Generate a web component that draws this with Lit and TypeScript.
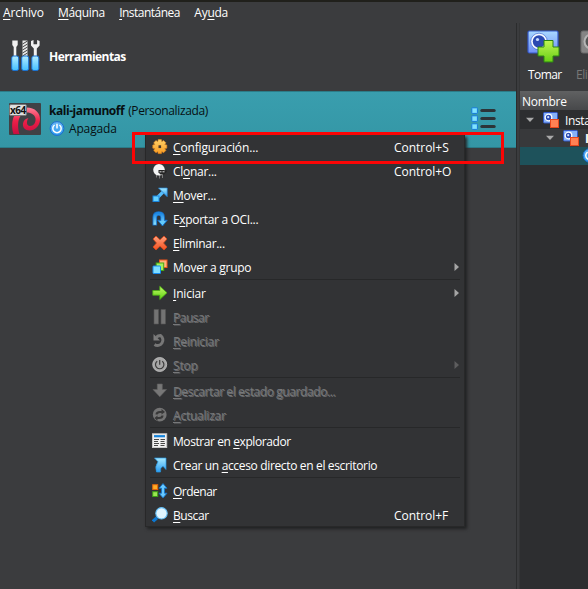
import { LitElement, html, svg, css, nothing, TemplateResult } from "lit";
import { customElement, property } from "lit/decorators.js";

/** Label with an "&" mnemonic marker, tracked so that it spans a given width. */
@customElement("ui-label")
class UiLabel extends LitElement {
  @property() text = "";
  @property({ type: Number }) span = 0;

  static styles = css`
    :host { display: block; white-space: pre; line-height: 16px; }
    .run { display: inline-block; }
    .key { text-decoration: underline; text-decoration-thickness: 1px; text-underline-offset: 2px; }
  `;

  updated() {
    const run = this.renderRoot.querySelector<HTMLElement>(".run")!;
    run.style.letterSpacing = "0px";
    const count = this.text.replace("&", "").length;
    if (this.span) run.style.letterSpacing = `${(this.span - 0.3 - run.getBoundingClientRect().width) / count}px`;
  }

  render() {
    const i = this.text.indexOf("&");
    return i < 0
      ? html`<span class="run">${this.text}</span>`
      : html`<span class="run">${this.text.slice(0, i)}<span class="key">${this.text[i + 1]}</span>${this.text.slice(i + 2)}</span>`;
  }
}

const glyphs: Record<string, TemplateResult> = {
  gear: svg`<path d="M6.200.600h3.200l.4 2.100 1.800-1.200 2.300 2.300-1.200 1.800 2.100.400v3.200l-2.100.400 1.200 1.800-2.300 2.300-1.800-1.200-.4 2.100H6.200l-.4-2.100-1.800 1.200-2.300-2.300 1.200-1.800L.8 9.200V6l2.100-.4L1.700 3.800 4 1.500l1.800 1.200z" fill="url(#gold)" stroke="#e58a20" stroke-width=".6"/><rect x="6.500" y="6.300" width="2.600" height="2.800" fill="#4a3a2c"/>`,
  sheep: svg`<path d="M4.500 11v3.500M7.500 12v3.500M10.500 11v4" stroke="#7b7b7b" stroke-width="1"/><circle cx="7" cy="6.800" r="5.800" fill="#f4f4f4"/><path d="M6.500 7h5l3.500.7-.5 1.300-2.500 2.500H8.500l-2-2z" fill="#242424"/><path d="M7.500 8.800h2M10.500 8.800h2" stroke="#ddd"/>`,
  move: svg`<path d="M6 10 11 5" stroke="#55bdfb" stroke-width="3.200"/><path d="M6.500 1H15.200V9.700z" fill="url(#blue)" stroke="#2587d8" stroke-width=".7"/><rect x="1" y="9" width="6" height="5.500" fill="#63d0ff" stroke="#1a84dc"/>`,
  export: svg`<path d="M2.800 14.500V6.200Q2.800 2.500 6.700 2.500t3.900 3.700V10" fill="none" stroke="#156fc8" stroke-width="4.600"/><path d="M5.800 9.300h9.400l-4.700 5.700z" fill="#62cbfb" stroke="#156fc8"/><path d="M2.800 13.700V6.200Q2.800 2.500 6.700 2.500t3.900 3.700V11" fill="none" stroke="url(#bluef)" stroke-width="2.800"/>`,
  cross: svg`<path d="M4 1 8 4.800 12 1l3 3-3.500 4 3.500 4-3 3-4-3.800L4 15l-3-3 3.500-4L1 4z" fill="url(#red)" stroke="#d94618" stroke-width=".8"/>`,
  group: svg`<rect x="7.500" y="1" width="7.500" height="7.500" fill="#ffb27c" stroke="#f2541b"/><rect x="4.200" y="4" width="7.500" height="7.500" fill="#a5ee60" stroke="#46a915"/><rect x="1" y="7" width="7.500" height="7.500" rx=".5" fill="#7ddcff" stroke="#1589ee"/>`,
  go: svg`<path d="M.8 5.500h7V1.200L15 7.800l-7.200 6.700v-4.300h-7z" fill="url(#green)" stroke="#4ab011" stroke-width=".8"/>`,
  pause: svg`<path d="M2 .5h4.500v14.500H2zM9 .5h4.500v14.500H9z" fill="#737373" stroke="#555" stroke-width=".6"/>`,
  reset: svg`<path d="M1.500 1v6.500H8z" fill="#7c7c7c"/><path d="M4 4.500Q6 2.500 8.500 2.500A5.200 5.200 0 1 1 2.500 11.500" fill="none" stroke="#777" stroke-width="3"/>`,
  power: svg`<circle cx="7.700" cy="7.500" r="7" fill="#a6a6a6" stroke="#c4c4c4" stroke-width=".8"/><path d="M7.700 3v4.800M5.200 4.200a4.200 4.200 0 1 0 5 0" fill="none" stroke="#3c3c3c" stroke-width="1.200"/>`,
  powerBlue: svg`<circle cx="8" cy="7.500" r="6.900" fill="url(#power)" stroke="#1d6ccc" stroke-width="1"/><path d="M8 2.800v4.600M5.600 4a4.200 4.200 0 1 0 4.800 0" fill="none" stroke="#fff" stroke-width="1.500"/>`,
  down: svg`<path d="M5.300 1h5v5.500h4.300L7.800 13.800 1 6.500h4.300z" fill="#777" stroke="#626262" stroke-width=".6"/>`,
  refresh: svg`<circle cx="7.700" cy="7.700" r="6.900" fill="#747474"/><path d="M3.500 7.500Q3.500 4 8 4h1.500V2L13 5 9.500 7.500V6H8Q6 6 5.500 7.500M11.500 8.500q0 3.500-4.500 3.500H5.500v2L2.500 11l3-2.500V10H7q2 0 2.500-1.500" fill="#383838"/>`,
  page: svg`<rect x=".5" y=".8" width="14.200" height="13.700" fill="#f1f1f1" stroke="#c9c9c9"/><path d="M2 3.200h11" stroke="#1684dc" stroke-width="2.200"/><path d="M2 6.500h5M2 8.500h4M2 10.500h5M2 12.500h4M8.500 6.500h4.500M8.500 8.500h4M8.500 10.500h4.500M8.500 12.500h4" stroke="#484848"/>`,
  shortcut: svg`<path d="M2.500 1H14V12.500L11 9.200Q7.800 11 8.500 15H4.500Q2.500 9.500 6 4.800z" fill="url(#blue)" stroke="#2799e7" stroke-width=".7"/>`,
  sort: svg`<rect x=".7" y="1.700" width="5" height="4.800" fill="#ffae26" stroke="#e2650c"/><rect x=".7" y="8.700" width="5" height="4.800" fill="#9be851" stroke="#3b9f17"/><path d="M11 .600 15 5.200h-2.500v5H15l-4 4.700-4-4.700h2.500v-5H7z" fill="#68c9ff" stroke="#1474cb" stroke-width=".9"/>`,
  search: svg`<path d="M1 14.300 5 10.800" stroke="#0c78d2" stroke-width="3.200"/><circle cx="9.500" cy="6.300" r="5.700" fill="#dff5ff" stroke="#63bff7" stroke-width="1.100"/>`,
};

const icon = (name: string, size = 16) =>
  html`<svg width=${size} height=${size} viewBox="0 0 16 16">
    <defs>
      <linearGradient id="gold" x2="0" y2="1"><stop stop-color="#ffd36a"/><stop offset="1" stop-color="#f99b20"/></linearGradient>
      <linearGradient id="blue" x2="0" y2="1"><stop stop-color="#a6eaff"/><stop offset="1" stop-color="#2a9bf0"/></linearGradient>
      <linearGradient id="power" x2="0" y2="1"><stop stop-color="#69b6f3"/><stop offset="1" stop-color="#2d9df0"/></linearGradient>
      <linearGradient id="bluef" x2="0" y2="1"><stop stop-color="#1e88e2"/><stop offset="1" stop-color="#8be2ff"/></linearGradient>
      <linearGradient id="red" x2="0" y2="1"><stop stop-color="#ffa27e"/><stop offset="1" stop-color="#f2501f"/></linearGradient>
      <linearGradient id="green" x2="0" y2="1"><stop stop-color="#c5f86a"/><stop offset="1" stop-color="#5ed411"/></linearGradient>
    </defs>${glyphs[name]}</svg>`;

interface Entry { icon: string; text: string; span: number; keys?: string; keySpan?: number; sub?: boolean; off?: boolean }
const groups: Entry[][] = [
  [
    { icon: "gear", text: "&Configuración...", span: 85.5, keys: "Control+S", keySpan: 55 },
    { icon: "sheep", text: "Cl&onar...", span: 44, keys: "Control+O", keySpan: 57.5 },
    { icon: "move", text: "&Mover...", span: 43.5 },
    { icon: "export", text: "E&xportar a OCI...", span: 85.5 },
    { icon: "cross", text: "&Eliminar...", span: 52 },
    { icon: "group", text: "Mover a &grupo", span: 78.5, sub: true },
  ],
  [
    { icon: "go", text: "&Iniciar", span: 33, sub: true },
    { icon: "pause", text: "&Pausar", span: 36, off: true },
    { icon: "reset", text: "&Reiniciar", span: 46, off: true },
    { icon: "power", text: "&Stop", span: 25, sub: true, off: true },
  ],
  [
    { icon: "down", text: "&Descartar el estado guardado...", span: 162.5, off: true },
    { icon: "refresh", text: "&Actualizar", span: 53, off: true },
  ],
  [
    { icon: "page", text: "Mostrar en &explorador", span: 118 },
    { icon: "shortcut", text: "Crear un &acceso directo en el escritorio", span: 204.5 },
  ],
  [
    { icon: "sort", text: "&Ordenar", span: 44 },
    { icon: "search", text: "&Buscar", span: 36, keys: "Control+F", keySpan: 54.5 },
  ],
];

const camera = html`<svg width="33" height="33" viewBox="0 0 33 33">
  <defs>
    <linearGradient id="cam" x2="0" y2="1"><stop stop-color="#a9d8ff"/><stop offset="1" stop-color="#6f8ff6"/></linearGradient>
    <linearGradient id="plus" x2="0" y2="1"><stop stop-color="#c0f455"/><stop offset="1" stop-color="#68d014"/></linearGradient>
  </defs>
  <rect x="1" y="1" width="30" height="22" rx="1.500" fill="url(#cam)" stroke="#3559c9" stroke-width="1.200"/>
  <circle cx="12" cy="11.500" r="8.300" fill="#f5f9ff" stroke="#3559c9" stroke-width=".6"/>
  <circle cx="12" cy="11.500" r="6.200" fill="#2b49b1"/><circle cx="10.500" cy="9.500" r="1.600" fill="#c9dcff"/>
  <path d="M17 10.500h9v6.500H32v9h-6v6h-9v-6h-6v-9h6z" fill="url(#plus)" stroke="#2c8512"/>
</svg>`;

const cameraOff = html`<svg width="32" height="33" viewBox="0 0 32 33">
  <rect x="1" y="1" width="29.500" height="22" rx="2" fill="#858585" stroke="#6b6b6b"/>
  <circle cx="11.500" cy="11.500" r="7" fill="#555" stroke="#b5b5b5" stroke-width="2"/>
</svg>`;

const snapshot = html`<svg class="shot" width="16" height="16" viewBox="0 0 16 16">
  <rect x=".5" y=".5" width="14" height="10.500" rx="1" fill="#86b1f8" stroke="#3358c8"/>
  <circle cx="5.500" cy="5.500" r="3.300" fill="#2d4cb5" stroke="#fff" stroke-width="1.300"/><circle cx="5.200" cy="5.200" r="1.100" fill="#cfe0ff"/>
  <rect x="7.500" y="7.500" width="8" height="8" fill="#ff8154" stroke="#e8471c"/>
</svg>`;

const tools = html`<svg width="30" height="32" viewBox="0 0 30 32">
  <defs><linearGradient id="grip" x2="0" y2="1"><stop stop-color="#b3ecff"/><stop offset="1" stop-color="#43c0ff"/></linearGradient></defs>
  <path d="M1.300 0.500h5.400v4.500L5.300 7v9H2.700V7L1.300 5z" fill="#f1f1f1"/>
  <path d="M11.500.5h5v15.500h-5z" fill="#e9e9e9"/><path d="m11.500 4 5-3M11.500 7l5-3M11.500 10l5-3M11.500 13l5-3M11.500 16l5-3" stroke="#333" stroke-width=".9"/>
  <path d="M20 1 22.500 0v4.200h3.600V0l2.500 1v4.500L25.800 8.500V16h-3V8.500L20 5.500z" fill="#f1f1f1"/>
  <g fill="url(#grip)" stroke="#1a72d6"><rect x=".7" y="16" width="7" height="14.500" rx="2"/><rect x="10.700" y="16" width="7" height="14.500" rx="2"/><rect x="20.800" y="16" width="7" height="14.500" rx="2"/></g>
</svg>`;

const debian = html`<svg width="32" height="32" viewBox="0 0 32 32">
  <defs><linearGradient id="swirl" x2="0" y2="1"><stop stop-color="#ff8298"/><stop offset=".5" stop-color="#ee2048"/><stop offset="1" stop-color="#c80d40"/></linearGradient></defs>
  <rect width="32" height="32" rx="1" fill="#404145"/>
  <path d="M4.500 31C.5 18 6 4.500 17.500 4.500 26 4.500 31.500 10 31 17c-.5 6-5 10.500-10.500 10.500-4.500 0-7-3-6.500-7 .5-3 2.500-5 5.500-5.500-2 2.500-2.500 8 1.500 8 3.500 0 6-3 5.500-7.500C26 12 22 9.500 18 9.500 9.500 9.500 7.500 21 10.500 31z" fill="url(#swirl)"/>
</svg>`;

const details = html`<svg width="25" height="24" viewBox="0 0 25 24">
  ${[0.8, 8.8, 16.8].map((y) => svg`<rect x=".8" y=${y} width="5.600" height="5.600" rx=".5" fill="#7ee2ff" stroke="#1678d8"/><path d="M10.800 ${y + 2.8}h12.400" stroke="#2c3438" stroke-width="3" stroke-linecap="round"/>`)}
</svg>`;

const expander = html`<svg width="10" height="6" viewBox="0 0 10 6"><path d="M1 .8h8L5 5z" fill="#a9a9a9"/></svg>`;

@customElement("app-root")
class AppRoot extends LitElement {
  static styles = css`
    :host {
      display: block; position: relative; width: 588px; height: 589px; overflow: hidden;
      background: #3b3c3e; color: #fff; box-sizing: border-box; border-top: 2px solid #20201b;
      font: 12px/16px "Open Sans", "Noto Sans", sans-serif;
    }
    svg { display: block; flex: none; }
    .menubar { display: flex; gap: 14.4px; height: 21px; padding: 1px 0 0 3px; box-sizing: border-box; align-items: center; }
    .main { display: flex; height: 566px; }
    .machines { border-right: 1px solid #2b2c2d; box-sizing: border-box; flex: none; width: 517px; }
    .tools { display: flex; align-items: center; height: 68px; padding-left: 11px; gap: 8px; box-sizing: border-box; }
    .tools svg { margin-top: -2px; }
    .strong { font-weight: 700; }
    .machine {
      display: flex; align-items: center; height: 57px; box-sizing: border-box; padding: 0 20px 0 9px;
      background: linear-gradient(#399eae, #3496a5); border-top: 1px solid #2c7c88; border-bottom: 1px solid #2b7b87; color: #071012;
    }
    .machine > svg { margin-top: -1px; }
    .os { position: relative; margin: -1px 8px 0 0; }
    .arch {
      position: absolute; left: 0; top: 1px; width: 16px; height: 10px; border-radius: 2px; background: #dedede;
      border: 1px solid #777; color: #111; font: 700 10px/10px "Open Sans", sans-serif;
    }
    .arch ui-label { margin-top: -3px; }
    .info { flex: 1; }
    .line { display: flex; gap: 4px; height: 18px; align-items: center; }
    .side { flex: 1; overflow: hidden; margin-left: 2px; border-left: 1px solid #343536; }
    .actions { display: flex; height: 68px; padding: 7px 0 0 8px; gap: 14px; box-sizing: border-box; }
    .action { display: flex; flex-direction: column; gap: 4px; width: 34px; flex: none; }
    .action svg { margin-left: -1px; }
    .action.wide { width: 42px; }
    .action.wide svg { margin-left: 4px; }
    .dim { color: #777; }
    .head { height: 19px; padding-left: 2px; background: linear-gradient(#606162, #47484a); }
    .head ui-label { padding-top: 3px; }
    .tree { background: #2d2e30; height: 479px; }
    .node { display: flex; height: 19px; align-items: center; padding-left: 5px; gap: 6px; white-space: nowrap; }
    .node ui-label { padding-top: 2px; }
    .shot { margin-left: 2px; }
    .node.nested { height: 18px; background: #38393b; padding-left: 25px; }
    .node.picked { height: 18px; background: #1e525b; padding-left: 62px; }
    .menu {
      position: absolute; left: 145px; top: 133px; width: 320px; height: 392px; box-sizing: border-box;
      background: #323335; border: 1px solid #282829; border-top-width: 0; box-shadow: 2px 2px 3px #202122;
    }
    .item { display: flex; height: 24px; align-items: center; padding-left: 6px; }
    .item > svg { margin-top: -1px; }
    .item ui-label { padding-top: 2px; }
    .name { width: 221px; margin-left: 5px; }
    .off { color: #77787a; text-shadow: 1px .5px #68696b; }
    .keys { flex: 1; }
    .item > .more { margin: 0 4px 0 0; color: #a5a5a5; }
    .off > .more { color: #5d5d5e; }
    .rule { height: 1px; margin: 0 4px 1px; background: #272829; }
    .mark { position: absolute; left: 132px; top: 130px; width: 372px; height: 32px; box-sizing: border-box; border: 3px solid #fb0505; }
  `;

  private label(text: string, span: number, cls = "") {
    return html`<ui-label class=${cls} .text=${text} .span=${span}></ui-label>`;
  }

  private item(e: Entry) {
    return html`<div class="item ${e.off ? "off" : ""}">
      ${icon(e.icon)}${this.label(e.text, e.span, "name")}
      <div class="keys">${e.keys ? this.label(e.keys, e.keySpan!) : nothing}</div>
      ${e.sub ? html`<svg class="more" width="6" height="8" viewBox="0 0 6 8"><path d="M.5 0v8L5 4z" fill="currentColor"/></svg>` : nothing}
    </div>`;
  }

  render() {
    return html`
      <div class="menubar">
        ${this.label("&Archivo", 41)}${this.label("&Máquina", 47)}${this.label("&Instantánea", 61)}${this.label("Ay&uda", 34)}
      </div>
      <div class="main">
        <div class="machines">
          <div class="tools">${tools}${this.label("Herramientas", 77, "strong")}</div>
          <div class="machine">
            <div class="os">${debian}<div class="arch">${this.label("x64", 16)}</div></div>
            <div class="info">
              <div class="line">${this.label("kali-jamunoff", 75.5, "strong")}${this.label("(Personalizada)", 80)}</div>
              <div class="line">${icon("powerBlue")}${this.label("Apagada", 48)}</div>
            </div>
            ${details}
          </div>
        </div>
        <div class="side">
          <div class="actions">
            <div class="action">${camera}${this.label("Tomar", 34)}</div>
            <div class="action wide">${cameraOff}${this.label("Eliminar", 42, "dim")}</div>
          </div>
          <div class="head">${this.label("Nombre", 45)}</div>
          <div class="tree">
            <div class="node">${expander}${snapshot}${this.label("Instantánea 1", 72)}</div>
            <div class="node nested">${expander}${snapshot}${this.label("Instantánea 2", 76, "strong")}</div>
            <div class="node picked">${icon("powerBlue")}</div>
          </div>
        </div>
      </div>
      <div class="menu">
        ${groups.map((g, i) => html`${i ? html`<div class="rule"></div>` : nothing}${g.map((e) => this.item(e))}`)}
      </div>
      <div class="mark"></div>
    `;
  }
}
